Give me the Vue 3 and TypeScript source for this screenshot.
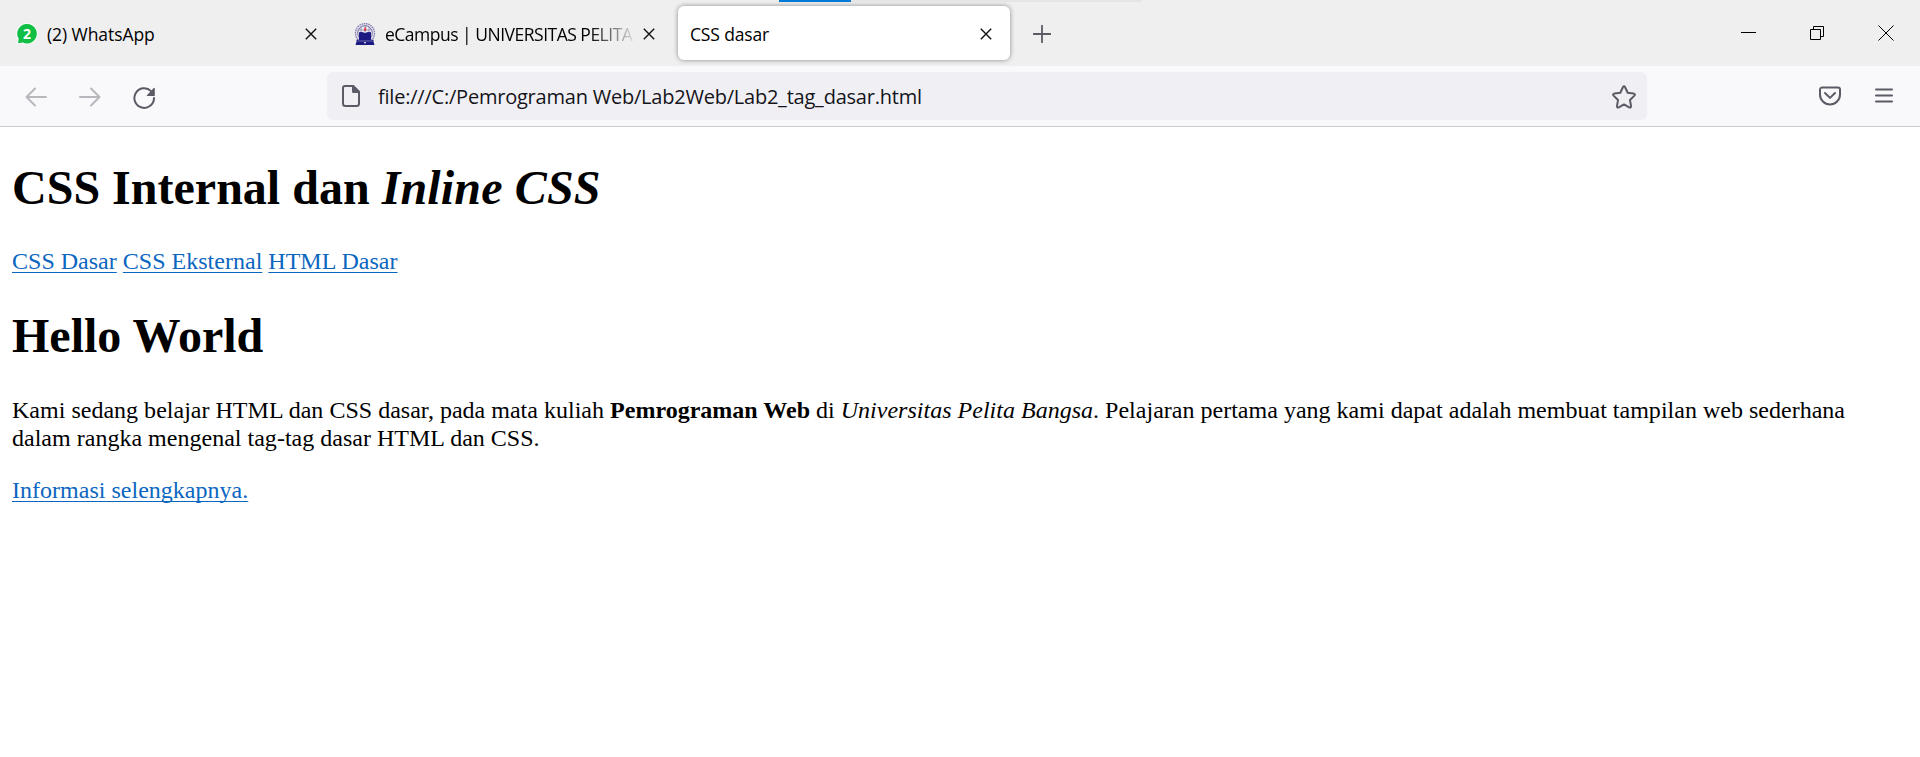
<script setup lang="ts">
interface SiteLink {
  label: string
}

const links: SiteLink[] = [
  { label: 'CSS Dasar' },
  { label: 'CSS Eksternal' },
  { label: 'HTML Dasar' },
]
</script>

<template>
  <div class="browser">
    <header class="tabstrip">
      <div class="load-track"><div class="load-bar"></div></div>

      <div class="tab tab-whatsapp">
        <svg class="favicon" viewBox="0 0 24 24" width="24" height="24">
          <path d="M12 1a10.7 10.7 0 0 1 0 21.500q-2.500 0-4.500-1l-6 1 1-5.500A10.7 10.7 0 0 1 12 1z" fill="#fafafa" />
          <path d="M12.300 2a9.700 9.700 0 1 1-4.300 18.500L3 21.200 3.700 16.800A9.700 9.700 0 0 1 12.300 2z" fill="#12bf45" />
          <text class="badge-count" x="12" y="17" text-anchor="middle">2</text>
        </svg>
        <span class="title">(2) WhatsApp</span>
        <svg class="close" viewBox="0 0 12 12" width="12" height="12"><path d="M.8.8l10.400 10.400M11.200.8L.8 11.200" /></svg>
      </div>

      <div class="tab tab-campus">
        <svg class="favicon" viewBox="0 0 24 24" width="24" height="24">
          <circle cx="12" cy="11.200" r="9.600" fill="#dddbe9" stroke="#7d78ae" stroke-width="1.200" stroke-dasharray="1.500 .8" />
          <circle cx="12" cy="11" r="7.300" fill="#eeedf5" stroke="#77729f" stroke-width="1" />
          <path d="M8 4.500v7M16 4.500v7M5.500 8h13M12 4v8" stroke="#8c87b0" stroke-width=".8" />
          <path d="M12.500 4.800q1.600 2.300.3 4.300h-1.400q-1.200-2 1.100-4.300z" fill="#e3343c" />
          <path d="M6 10.300q3.500-.7 6 1 2.500-1.700 6-1v7.400h2.500v2L21.500 23h-19l1-3.300v-2H6z" fill="#1c1a82" />
          <path d="M4.500 19h15" stroke="#8f8bc0" stroke-width=".7" />
          <path d="M11 20h2l-1 2z" fill="#fff" />
        </svg>
        <span class="title fade">eCampus | UNIVERSITAS PELITA</span>
        <svg class="close" viewBox="0 0 12 12" width="12" height="12"><path d="M.8.8l10.400 10.400M11.200.8L.8 11.200" /></svg>
      </div>

      <div class="tab tab-active">
        <span class="title">CSS dasar</span>
        <svg class="close" viewBox="0 0 12 12" width="12" height="12"><path d="M.8.8l10.400 10.400M11.200.8L.8 11.200" /></svg>
      </div>

      <svg class="new-tab" viewBox="0 0 18 18" width="18" height="18"><path d="M9 .7v16.600M.7 9h16.600" /></svg>

      <div class="window-buttons">
        <svg viewBox="0 0 16 16" width="16" height="16"><path d="M1 7.500h15" /></svg>
        <svg viewBox="0 0 16 16" width="16" height="16"><path d="M1.500 4.500h10v10h-10zM4.500 4.500v-3h10v10h-3" /></svg>
        <svg viewBox="0 0 16 16" width="16" height="16"><path d="M.5.5l15 15M15.500.5l-15 15" stroke-width="1.300" /></svg>
      </div>
    </header>

    <nav class="toolbar">
      <div class="history">
        <svg class="dim" viewBox="0 0 24 24" width="24" height="24"><path d="M22 12H3M11 3.500L2.500 12l8.500 8.500" /></svg>
        <svg class="dim" viewBox="0 0 24 24" width="24" height="24"><path d="M2 12h19M13 3.500l8.500 8.500-8.500 8.500" /></svg>
        <svg viewBox="0 0 24 24" width="24" height="24">
          <path d="M22 13a9.800 9.800 0 1 1-2.900-6.900" />
          <path class="solid" d="M22.800 3.300v7.200q0 .6-.6.6h-6.900q-1-.1-.4-.8l6.800-7.300q.9-.7 1.100.3z" />
        </svg>
      </div>

      <div class="address">
        <svg class="page-icon" viewBox="0 0 20 24" width="20" height="24">
          <path d="M4 2h8.300l5.700 5.700V19.500a2.500 2.500 0 0 1-2.500 2.500H4.500A2.500 2.500 0 0 1 2 19.500V4a2 2 0 0 1 2-2z" />
          <path class="solid" d="M11 1.500h1.500l6 6V9h-6A1.500 1.500 0 0 1 11 7.500z" />
        </svg>
        <span class="url">file:///C:/Pemrograman Web/Lab2Web/Lab2_tag_dasar.html</span>
        <svg class="star" viewBox="0 0 24 24" width="24" height="24">
          <path d="M10.900 2.200q1.100-1.900 2.200 0l2.600 5.500 6 .9q2 .5.700 2l-4.400 4.400 1 6.100q.1 2-1.800 1.200L12 19.400l-5.200 2.900q-1.900.8-1.800-1.200l1-6.100L1.600 10.600q-1.300-1.500.7-2l6-.9z" />
        </svg>
      </div>

      <div class="actions">
        <svg viewBox="0 0 24 24" width="24" height="24">
          <path d="M4 3.500h16a2 2 0 0 1 2 2v5a10 10 0 0 1-20 0v-5a2 2 0 0 1 2-2z" />
          <path d="M7 9l5 4.900L17 9" />
        </svg>
        <svg viewBox="0 0 24 24" width="24" height="24"><path d="M4 5.500h16M4 11.500h16M4 17.500h16" /></svg>
      </div>
    </nav>

    <main class="page">
      <h1>CSS Internal dan <i>Inline CSS</i></h1>
      <div class="links">
        <template v-for="link in links" :key="link.label"><a>{{ link.label }}</a>{{ ' ' }}</template>
      </div>
      <h1 class="greeting">Hello World</h1>
      <p>
        Kami sedang belajar HTML dan CSS dasar, pada mata kuliah <b>Pemrograman Web</b> di
        <i>Universitas Pelita Bangsa</i>. Pelajaran pertama yang kami dapat adalah membuat tampilan web
        sederhana dalam rangka mengenal tag-tag dasar HTML dan CSS.
      </p>
      <p><a>Informasi selengkapnya.</a></p>
    </main>
  </div>
</template>

<style>
body {
  margin: 0;
  background: #fff;
}
</style>

<style scoped>
.browser {
  height: 757px;
  overflow: hidden;
  background: #fff;
  color: #000;
}

svg {
  display: block;
  flex: none;
  fill: none;
}

.tabstrip {
  position: relative;
  display: flex;
  align-items: center;
  box-sizing: border-box;
  height: 66px;
  background: #efefef;
  font: 17.5px/24px "Open Sans", "Noto Sans", sans-serif;
}

.load-track {
  position: absolute;
  top: 0;
  left: 779px;
  width: 362px;
  height: 2px;
  background: #e5e5e5;
}

.load-bar {
  width: 72px;
  height: 2px;
  background: #0078d7;
}

.tab {
  display: flex;
  align-items: center;
  flex: none;
  box-sizing: border-box;
  height: 54px;
}

.tab-whatsapp {
  width: 338px;
  padding: 1px 21.5px 0 15px;
  letter-spacing: -0.07px;
}

.tab-campus {
  width: 340px;
  padding: 1px 23.5px 0 15px;
  letter-spacing: -0.5px;
}

.tab-active {
  width: 332px;
  padding: 1px 18.500px 0 12px;
  border-radius: 6px;
  background: #fff;
  box-shadow: 0 0 5px rgba(0, 0, 0, 0.42);
  letter-spacing: -0.15px;
}

.title {
  flex: 1;
  overflow: hidden;
  white-space: nowrap;
}

.favicon + .title {
  margin-left: 8px;
}

.fade {
  margin-right: 6px;
  mask-image: linear-gradient(to left, transparent, #000 48px);
}

.badge-count {
  fill: #fff;
  font: bold 14px "Open Sans", sans-serif;
}

.close path {
  stroke: #111;
  stroke-width: 1.4;
}

.new-tab {
  margin: 2px 0 0 23px;
}

.new-tab path {
  stroke: #5b5b66;
  stroke-width: 1.8;
  stroke-linecap: round;
}

.window-buttons {
  display: flex;
  gap: 53px;
  margin: 0 26px 0 auto;
}

.window-buttons path {
  stroke: #000;
  stroke-width: 1;
}

.toolbar {
  display: flex;
  align-items: center;
  box-sizing: border-box;
  height: 61px;
  border-bottom: 1px solid #cccccf;
  background: #f9f9fb;
}

.toolbar svg {
  stroke: #5b5b66;
  stroke-width: 2;
  stroke-linecap: round;
  stroke-linejoin: round;
}

.toolbar .solid {
  fill: #5b5b66;
  stroke: none;
}

.history {
  display: flex;
  gap: 30px;
  width: 303px;
  margin-left: 24px;
  padding-top: 2px;
}

.toolbar .dim {
  stroke: #b7b7bd;
}

.address {
  display: flex;
  align-items: center;
  box-sizing: border-box;
  width: 1320px;
  height: 48px;
  padding: 0 11px 0 14px;
  border-radius: 6px;
  background: #f0f0f4;
  color: #15141a;
}

.url {
  flex: 1;
  margin-left: 17px;
  padding-top: 2px;
  font: 20px/28px "Open Sans", "Noto Sans", sans-serif;
  letter-spacing: -0.22px;
  white-space: nowrap;
}

.star {
  margin-top: 1px;
}

.actions {
  display: flex;
  gap: 30px;
  margin: 0 24px 0 auto;
}

.page {
  padding: 0 40px 0 12px;
  font: 24px/28px "Liberation Serif", "Times New Roman", serif;
  letter-spacing: 0.013px;
}

h1 {
  margin: 0;
  padding: 33px 0 31px;
  font-size: 48px;
  line-height: 56px;
}

h1 i {
  letter-spacing: 0.15px;
}

.greeting {
  padding-bottom: 32px;
}

p {
  margin: 0 0 24px;
}

a {
  color: #0b66c0;
  text-decoration: underline;
  text-decoration-thickness: 1px;
  text-decoration-skip-ink: none;
  text-underline-offset: 3px;
}
</style>
